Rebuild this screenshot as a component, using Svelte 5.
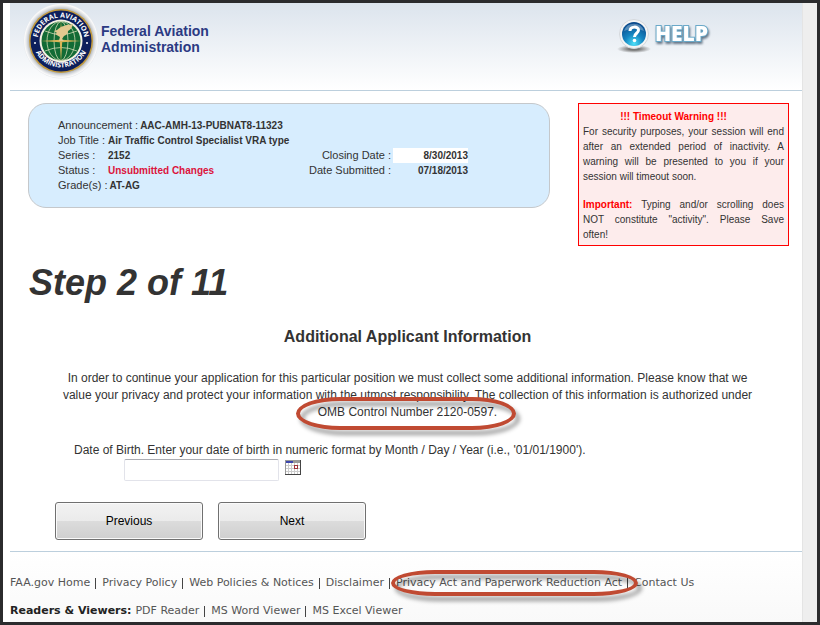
<script>
  let birthDate = $state('')

  const job = [
    { label: 'Announcement :', value: 'AAC-AMH-13-PUBNAT8-11323' },
    { label: 'Job Title :', value: 'Air Traffic Control Specialist VRA type' },
    { label: 'Series :', value: '2152' },
    { label: 'Status :', value: 'Unsubmitted Changes', alert: true },
    { label: 'Grade(s) :', value: 'AT-AG' }
  ]
  const dates = [
    { label: 'Closing Date :', value: '8/30/2013', filled: true },
    { label: 'Date Submitted :', value: '07/18/2013' }
  ]
  const policies = ['FAA.gov Home', 'Privacy Policy', 'Web Policies & Notices', 'Disclaimer']
  const viewers = ['PDF Reader', 'MS Word Viewer', 'MS Excel Viewer']
</script>

<div class="frame">
  <div class="page">
    <header>
      <a class="brand" href="#home">
        <svg class="seal" viewBox="0 0 76 76" aria-hidden="true">
          <defs>
            <radialGradient id="halo">
              <stop offset="0.84" stop-color="#aeb4ba" />
              <stop offset="0.92" stop-color="#e2e4e7" />
              <stop offset="0.97" stop-color="#fafafa" />
              <stop offset="1" stop-color="#e6e9ed" />
            </radialGradient>
            <path id="arcTop" d="M14.5 38a23.5 23.5 0 0 1 47 0" />
            <path id="arcBottom" d="M9.500 36a28.500 28.500 0 0 0 57 0" />
          </defs>
          <circle cx="38" cy="38" r="37.5" fill="url(#halo)" />
          <circle cx="38" cy="38" r="32" fill="#c39a3c" />
          <circle cx="38" cy="38" r="30.5" fill="#0d1f5c" />
          <circle cx="38" cy="38" r="21.500" fill="#f4f1e2" />
          <circle cx="38" cy="38" r="19.500" fill="#126b35" />
          <g fill="none" stroke="#cfd9b4" stroke-width="0.8">
            <ellipse cx="38" cy="38" rx="7" ry="19.500" />
            <ellipse cx="38" cy="38" rx="14" ry="19.500" />
            <path d="M22 28q16 7 32 0M22 48q16-7 32 0" />
          </g>
          <path d="M38 18l1.200 18.800L58 38l-18.800 1.200L38 59l-1.200-19.800L18 38l18.800-1.200z" fill="#d9b558" />
          <path d="M34 27c4-4 9-5 16-6-1 4-3 6-5 7 0 3-2 4-4 5l-2 3 2 2h-5l1-4-5-3 2-1-3-2z" fill="#e2c98f" />
          <g class="ring">
            <text><textPath href="#arcTop" startOffset="50%">FEDERAL AVIATION</textPath></text>
            <text><textPath href="#arcBottom" startOffset="50%">ADMINISTRATION</textPath></text>
          </g>
          <circle cx="12" cy="40" r="1" fill="#fff" />
          <circle cx="64" cy="40" r="1" fill="#fff" />
        </svg>
        <span>Federal Aviation<br />Administration</span>
      </a>
      <a class="help" href="#help" aria-label="Help">
        <svg viewBox="0 0 96 40" aria-hidden="true">
          <defs>
            <radialGradient id="ball" cx="0.5" cy="0.9" r="0.85">
              <stop offset="0" stop-color="#4fe0f8" />
              <stop offset="0.45" stop-color="#1687c2" />
              <stop offset="1" stop-color="#0a4a8c" />
            </radialGradient>
            <radialGradient id="floor">
              <stop offset="0.3" stop-color="#777" />
              <stop offset="1" stop-color="#777" stop-opacity="0" />
            </radialGradient>
          </defs>
          <ellipse cx="18" cy="33" rx="17" ry="4" fill="url(#floor)" />
          <circle cx="18" cy="18" r="14.500" fill="#f5f5f5" stroke="#d4d8dc" />
          <circle cx="18" cy="18" r="12" fill="url(#ball)" />
          <path d="M8 15a10.500 10.500 0 0 1 20 0q-10-5-20 0z" fill="#fff" opacity="0.3" />
          <path d="M14 15c0-5 8.500-5 8.500-1 0 3.500-4 3-4 7" fill="none" stroke="#fff" stroke-width="3" />
          <circle cx="18.500" cy="24.500" r="1.800" fill="#fff" />
          <text x="39" y="25">HELP</text>
        </svg>
      </a>
    </header>

    <main>
      <div class="top">
        <section class="job">
          <dl>
            {#each job as row}
              <div>
                <dt>{row.label}</dt>
                <dd class:alert={row.alert}>{row.value}</dd>
              </div>
            {/each}
          </dl>
          <dl class="dates">
            {#each dates as row}
              <div>
                <dt>{row.label}</dt>
                <dd class:filled={row.filled}>{row.value}</dd>
              </div>
            {/each}
          </dl>
        </section>

        <aside>
          <h3>!!! Timeout Warning !!!</h3>
          <p>For security purposes, your session will end after an extended period of inactivity. A warning will be presented to you if your session will timeout soon.</p>
          <p>
            <span class="full"><strong>Important:</strong> Typing and/or scrolling does</span>
            <span class="full">NOT constitute "activity". Please Save</span>
            often!
          </p>
        </aside>
      </div>

      <h1>Step 2 of 11</h1>
      <h2>Additional Applicant Information</h2>

      <p class="intro">
        In order to continue your application for this particular position we must collect some additional information. Please know that we value your privacy and protect your information with the utmost responsibility. The collection of this information is authorized under
        <span class="marked omb">OMB Control Number 2120-0597.</span>
      </p>

      <form onsubmit={e => e.preventDefault()}>
        <label for="birth">Date of Birth. Enter your date of birth in numeric format by Month / Day / Year (i.e., '01/01/1900').</label>
        <div class="field">
          <input id="birth" type="text" bind:value={birthDate} />
          <button class="calendar" type="button" aria-label="Choose a date">
            <svg viewBox="0 0 16 15" shape-rendering="crispEdges">
              <path d="M0 0h16v15H0z" fill="#999" />
              <path d="M1 3h14v11H1z" fill="#fff" />
              <path d="M1 5.500h14M1 8.500h14M1 11.500h14M3.500 3v11M6.500 3v11M9.500 3v11M12.500 3v11" stroke="#ccc" />
              <path d="M1 1h7v2H1z" fill="#3c46ad" />
              <path d="M9.500 5.500h3v3h-3z" fill="#fff" stroke="#a03038" />
              <path d="M15.500 0v15M0 14.500h16" stroke="#444" />
            </svg>
          </button>
        </div>
        <div class="actions">
          <button type="button">Previous</button>
          <button type="submit">Next</button>
        </div>
      </form>
    </main>

    <footer>
      <nav>
        {#each policies as name}
          <a href="#policies">{name}</a><i></i>
        {/each}
        <span class="marked privacy"><a href="#privacy">Privacy Act and Paperwork Reduction Act</a><i></i></span>
        <a href="#contact">Contact Us</a>
      </nav>
      <nav>
        <strong>Readers &amp; Viewers:</strong>
        {#each viewers as name, n}
          {#if n}<i></i>{/if}
          <a href="#viewers">{name}</a>
        {/each}
      </nav>
    </footer>
  </div>
</div>

<style>
  :global(body) {
    background: #2b2b2d;
  }
  .frame {
    box-sizing: border-box;
    min-height: 100vh;
    padding: 3px;
    display: flex;
    font-family: "Liberation Sans", Arial, sans-serif;
    font-size: 12px;
    color: #333;
  }
  .page {
    flex: 1;
    background: #fff;
    border-right: 14px solid #eee;
    padding: 0 1px 0 7px;
    box-shadow: inset -1px 0 #e4e4e4;
  }
  a {
    color: inherit;
    text-decoration: none;
  }
  h1, h2, h3, p, dl, dd {
    margin: 0;
  }
  header {
    display: flex;
    justify-content: space-between;
    height: 87px;
    padding: 0 90px 0 13px;
    border-bottom: 1px solid #bccfdd;
    background: linear-gradient(#dce4ed, #fff);
  }
  .brand {
    display: flex;
    gap: 2px;
    color: #2b3a83;
    font-size: 14px;
    font-weight: bold;
    line-height: 16px;
  }
  .brand span {
    padding-top: 20px;
  }
  .seal {
    width: 76px;
    height: 76px;
  }
  .ring text {
    fill: #fff;
    font-family: "Open Sans", sans-serif;
    font-size: 7px;
    font-weight: bold;
    text-anchor: middle;
  }
  .help svg {
    width: 96px;
    height: 40px;
    margin-top: 13px;
  }
  .help text {
    font-family: "Open Sans", sans-serif;
    font-size: 21px;
    font-weight: 800;
    fill: #fff;
    stroke: #6aa9c9;
    stroke-width: 2px;
    paint-order: stroke;
    filter: drop-shadow(1px 2px 1px #678);
  }
  .top {
    display: flex;
    align-items: flex-start;
    gap: 28px;
    padding: 12px 13px 0 18px;
  }
  .job {
    box-sizing: border-box;
    flex: 1;
    display: flex;
    justify-content: space-between;
    padding: 14px 81px 14px 29px;
    border: 1px solid #c5c8cb;
    border-radius: 18px;
    background: #d7edfe;
    font-size: 11px;
    line-height: 15px;
  }
  .job dl div {
    display: flex;
    gap: 2px;
  }
  .job dt {
    min-width: 48px;
  }
  .job dd {
    font-size: 10px;
    font-weight: bold;
  }
  .job .alert {
    color: #dc143c;
  }
  .dates {
    padding-top: 30px;
  }
  .dates dt {
    flex: 1;
    text-align: right;
  }
  .dates dd {
    width: 75px;
    text-align: right;
  }
  .filled {
    background: #fff;
  }
  aside {
    box-sizing: border-box;
    width: 211px;
    padding: 6px 4px 3px;
    border: 1px solid #f00;
    background: #fdecec;
    font-size: 10px;
    line-height: 15px;
  }
  aside h3 {
    padding-right: 20px;
    color: #f00;
    font-size: 10px;
    line-height: 14px;
    text-align: center;
  }
  aside p {
    text-align: justify;
  }
  aside p + p {
    margin-top: 13px;
  }
  .full {
    display: block;
    text-align-last: justify;
  }
  aside strong {
    color: #f00;
  }
  h1 {
    margin: 17px 0 24px 19px;
    font-size: 36px;
    font-style: italic;
    line-height: 40px;
  }
  h2 {
    padding-left: 3px;
    font-size: 16px;
    line-height: 20px;
    text-align: center;
  }
  .intro {
    padding: 23px 42px 0 45px;
    line-height: 17px;
    text-align: center;
  }
  .marked {
    position: relative;
    display: inline-block;
  }
  .marked::after {
    content: "";
    position: absolute;
    border: 4px solid #c04a32;
    border-radius: 44px / 50%;
    filter: drop-shadow(4px 5px 2px rgba(0, 0, 0, 0.4));
    pointer-events: none;
  }
  .omb::after {
    inset: -7px -19px -9px -22px;
  }
  .privacy::after {
    inset: -5px -4px -5px -5px;
  }
  form {
    padding: 21px 45px 11px;
  }
  label {
    display: block;
    margin-left: 19px;
    line-height: 16px;
  }
  .field {
    display: flex;
    gap: 6px;
    margin: 1px 0 21px 69px;
  }
  input {
    box-sizing: border-box;
    width: 155px;
    height: 22px;
    border: 1px solid #e2e3ea;
    border-top-color: #abadb3;
    border-radius: 2px;
    background: #fff;
    font: inherit;
  }
  .calendar {
    width: 16px;
    height: 15px;
    margin-top: 1px;
    padding: 0;
    border: 0;
    background: none;
  }
  .calendar svg {
    display: block;
    width: 16px;
    height: 15px;
  }
  .actions {
    display: flex;
    gap: 15px;
  }
  .actions button {
    width: 148px;
    height: 38px;
    border: 1px solid #707070;
    border-radius: 3px;
    background: linear-gradient(#f2f2f2, #ebebeb 49%, #dcdcdc 50%, #cfcfcf);
    box-shadow: inset 0 0 0 1px #fafafa;
    color: #000;
    font: inherit;
    font-size: 12px;
  }
  footer {
    border-top: 1px solid #bccfdd;
    padding: 23px 0 3px;
    background: linear-gradient(#fff, #f9f9f9);
    color: #555;
    font-family: "DejaVu Sans", Verdana, sans-serif;
    font-size: 11px;
  }
  nav {
    display: flex;
    align-items: center;
    line-height: 16px;
  }
  nav + nav {
    margin-top: 12px;
  }
  nav strong {
    margin-right: 4px;
    color: #222;
  }
  nav i {
    display: inline-block;
    width: 1px;
    height: 11px;
    margin: 0 6px 0 5px;
    background: #444;
    vertical-align: middle;
  }
</style>
